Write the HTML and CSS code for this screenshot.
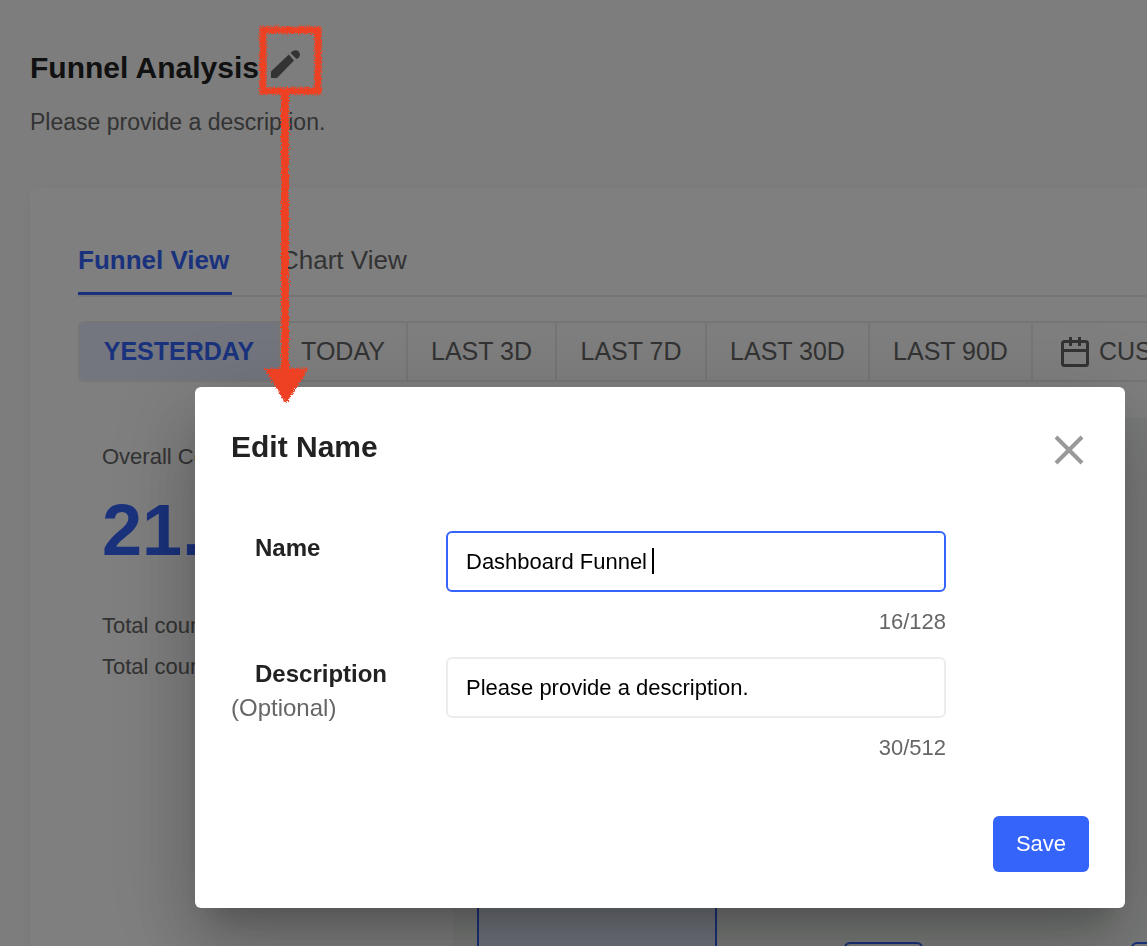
FILE: index.html
```
<!DOCTYPE html>
<html lang="en">
<head>
    <meta charset="UTF-8">
    <meta name="viewport" content="width=device-width, initial-scale=1.0">
    <title>Funnel Analysis</title>
    <link rel="stylesheet" href="styles.css">
</head>
<body>
    <main class="page">
        <header class="page-header">
            <div class="title-row">
                <h1>Funnel Analysis</h1>
                <button type="button" class="icon-btn" aria-label="Edit name">
                    <svg width="30" height="30" viewBox="0 0 30 30" fill="#666">
                        <path d="M1 29V22.5L18.8 5.5L24 11.5L7 29Z"/>
                        <path d="M20.6 4C23 .6 27 .4 29 3C31 5.8 29.8 8.8 26.5 10Z"/>
                    </svg>
                </button>
            </div>
            <p>Please provide a description.</p>
        </header>

        <section class="card">
            <nav class="tabs">
                <a href="#" class="tab active">Funnel View</a>
                <a href="#" class="tab">Chart View</a>
            </nav>
            <div class="range">
                <button type="button" class="active">YESTERDAY</button>
                <button type="button">TODAY</button>
                <button type="button">LAST 3D</button>
                <button type="button">LAST 7D</button>
                <button type="button">LAST 30D</button>
                <button type="button">LAST 90D</button>
                <button type="button" class="custom">
                    <svg width="28" height="30" viewBox="0 0 28 30" fill="none" stroke="#666" stroke-width="3">
                        <rect x="1.5" y="4.5" width="25" height="24" rx="2"/>
                        <path d="M1.5 13.5H26.5M9.5 0V9M18.5 0V9"/>
                    </svg>
                    CUSTOM
                </button>
            </div>
            <div class="funnel">
                <div class="summary">
                    <p>Overall Conversion</p>
                    <strong>21.4%</strong>
                    <p class="total">Total count</p>
                    <p class="total">Total count</p>
                </div>
                <div class="steps">
                    <div class="step"></div>
                    <div class="badge"></div>
                    <div class="badge"></div>
                </div>
            </div>
        </section>
    </main>

    <div class="overlay">
        <div class="dialog" role="dialog" aria-labelledby="dialog-title">
            <div class="dialog-header">
                <h2 id="dialog-title">Edit Name</h2>
                <button type="button" class="icon-btn" aria-label="Close">
                    <svg width="30" height="30" viewBox="0 0 30 30" stroke="#999" stroke-width="4">
                        <path d="M2 2L28 28M28 2L2 28"/>
                    </svg>
                </button>
            </div>
            <form>
                <div class="row">
                    <label for="name"><b>Name</b></label>
                    <div class="field">
                        <input type="text" id="name" class="focused" value="Dashboard Funnel">
                        <span class="caret"></span>
                        <span class="count">16/128</span>
                    </div>
                </div>
                <div class="row">
                    <label for="description"><b>Description</b> (Optional)</label>
                    <div class="field">
                        <input type="text" id="description" value="Please provide a description.">
                        <span class="count">30/512</span>
                    </div>
                </div>
                <div class="actions">
                    <button type="submit" class="save">Save</button>
                </div>
            </form>
        </div>
    </div>

    <!-- hand-drawn arrow from the pencil to the dialog -->
    <svg class="arrow" width="340" height="420" viewBox="0 0 340 420">
        <filter id="rough" filterUnits="userSpaceOnUse" x="240" y="10" width="100" height="405">
            <feTurbulence type="fractalNoise" baseFrequency="0.7" numOctaves="2" seed="4"/>
            <feDisplacementMap in="SourceGraphic" scale="6" xChannelSelector="R" yChannelSelector="G"/>
        </filter>
        <g filter="url(#rough)" fill="none" stroke="#ee4023" stroke-width="7">
            <path d="M263 30H318V91H263Z"/>
            <path d="M285 91V372" stroke-width="8"/>
            <path d="M267 370H306L286 401Z" fill="#ee4023" stroke-width="3"/>
        </g>
    </svg>
</body>
</html>
```
FILE: styles.css
```
* {
    box-sizing: border-box;
}
html,
body {
    height: 100%;
    margin: 0;
    overflow: hidden;
}
body {
    font-family: "Liberation Sans", Arial, sans-serif;
    font-size: 22px;
    color: #666;
    background: #fafafa;
}
h1, h2, p {
    margin: 0;
}
button, input {
    font-family: inherit;
}
svg {
    display: block;
}
.icon-btn {
    padding: 0;
    border: none;
    background: none;
    cursor: pointer;
}

/* dashboard */
.page {
    display: flex;
    flex-direction: column;
    height: 100%;
    padding: 44px 0 0 30px;
}
.page-header {
    margin-bottom: 51px;
}
.title-row {
    display: flex;
    gap: 8px;
    line-height: 48px;
}
.title-row svg {
    margin-bottom: 8px;
}
h1 {
    width: 232px;
    font-size: 30px;
    color: #222;
    white-space: nowrap;
}
.page-header p {
    margin-top: 15px;
    font-size: 23px;
    line-height: 30px;
}
.card {
    flex: 1;
    display: flex;
    flex-direction: column;
    padding: 48px 0 0 48px;
    background: #fff;
    border-radius: 8px 0 0 0;
    box-shadow: 0 2px 8px rgba(0, 0, 0, 0.04);
}
.tabs {
    display: flex;
    gap: 48px;
    border-bottom: 2px solid #ececec;
}
.tab {
    min-width: 154px;
    height: 59px;
    font-size: 26px;
    line-height: 48px;
    color: #666;
    text-decoration: none;
}
.tab.active {
    font-weight: bold;
    color: #3564fa;
    border-bottom: 3px solid #3564fa;
}
.range {
    display: grid;
    grid-template-columns: 200px 128px 149px 150px 163px 163px 1fr;
    height: 61px;
    margin-top: 24px;
    border: 2px solid #ececec;
    border-right: none;
    border-radius: 6px 0 0 6px;
    overflow: hidden;
}
.range button {
    padding: 0;
    border: none;
    border-right: 2px solid #ececec;
    background: none;
    font-size: 25px;
    color: #666;
}
.range .active {
    font-weight: bold;
    color: #3564fa;
    background: #e6ecfd;
}
.range .custom {
    display: flex;
    align-items: center;
    gap: 10px;
    padding-left: 28px;
    border-right: none;
    overflow: hidden;
}
.range svg {
    flex: none;
}
.funnel {
    flex: 1;
    display: grid;
    grid-template-columns: 375px 1fr;
    min-height: 0;
    margin-top: 36px;
}
.summary {
    padding: 24px;
    line-height: 30px;
}
.summary strong {
    display: block;
    margin: 18px 0 35px;
    font-size: 72px;
    line-height: 80px;
    color: #3564fa;
}
.summary .total {
    line-height: 41px;
}
.steps {
    display: flex;
    padding-left: 24px;
    background: #f5f9f6;
    overflow: hidden;
}
.step {
    flex: none;
    width: 240px;
    background: #e6ecfd;
    border: 2px solid #3564fa;
    border-width: 0 2px;
}
.badge {
    flex: none;
    width: 79px;
    height: 40px;
    margin: 524px 81px 0 127px;
    border: 2px solid #3564fa;
    border-radius: 6px;
    background: #fff;
}

/* dialog */
.overlay {
    position: fixed;
    inset: 0;
    display: flex;
    align-items: flex-end;
    padding: 0 22px 38px 195px;
    background: rgba(0, 0, 0, 0.5);
}
.dialog {
    flex: 1;
    padding: 36px;
    background: #fff;
    border-radius: 6px;
    box-shadow: 0 22px 30px -14px rgba(0, 0, 0, 0.2),
        0 48px 76px 6px rgba(0, 0, 0, 0.14),
        0 18px 92px 16px rgba(0, 0, 0, 0.12);
}
.dialog-header {
    display: flex;
    align-items: center;
    justify-content: space-between;
    margin-bottom: 60px;
    padding-right: 5px;
}
.dialog-header svg {
    margin-top: 6px;
}
h2 {
    font-size: 30px;
    line-height: 48px;
    color: #222;
}
.row {
    display: flex;
    margin-bottom: 21px;
}
label {
    width: 215px;
    font-size: 24px;
    line-height: 34px;
}
label b {
    display: block;
    padding-left: 24px;
    color: #222;
}
.field {
    position: relative;
    width: 500px;
}
input {
    display: block;
    width: 100%;
    height: 61px;
    padding: 0 18px;
    border: 2px solid #ececec;
    border-radius: 6px;
    outline: none;
    font-size: 22px;
    color: #000;
}
input.focused {
    border-color: #3564fa;
    caret-color: transparent;
}
.caret {
    position: absolute;
    top: 17px;
    left: 206px;
    width: 2px;
    height: 26px;
    background: #000;
}
.count {
    display: block;
    margin-top: 16px;
    line-height: 28px;
    text-align: right;
}
.actions {
    display: flex;
    justify-content: flex-end;
    margin-top: 54px;
}
.save {
    width: 96px;
    height: 56px;
    border: none;
    border-radius: 6px;
    background: #3564fa;
    color: #fff;
    font-size: 22px;
    cursor: pointer;
}
.arrow {
    position: absolute;
    top: 0;
    left: 0;
    pointer-events: none;
}
```
